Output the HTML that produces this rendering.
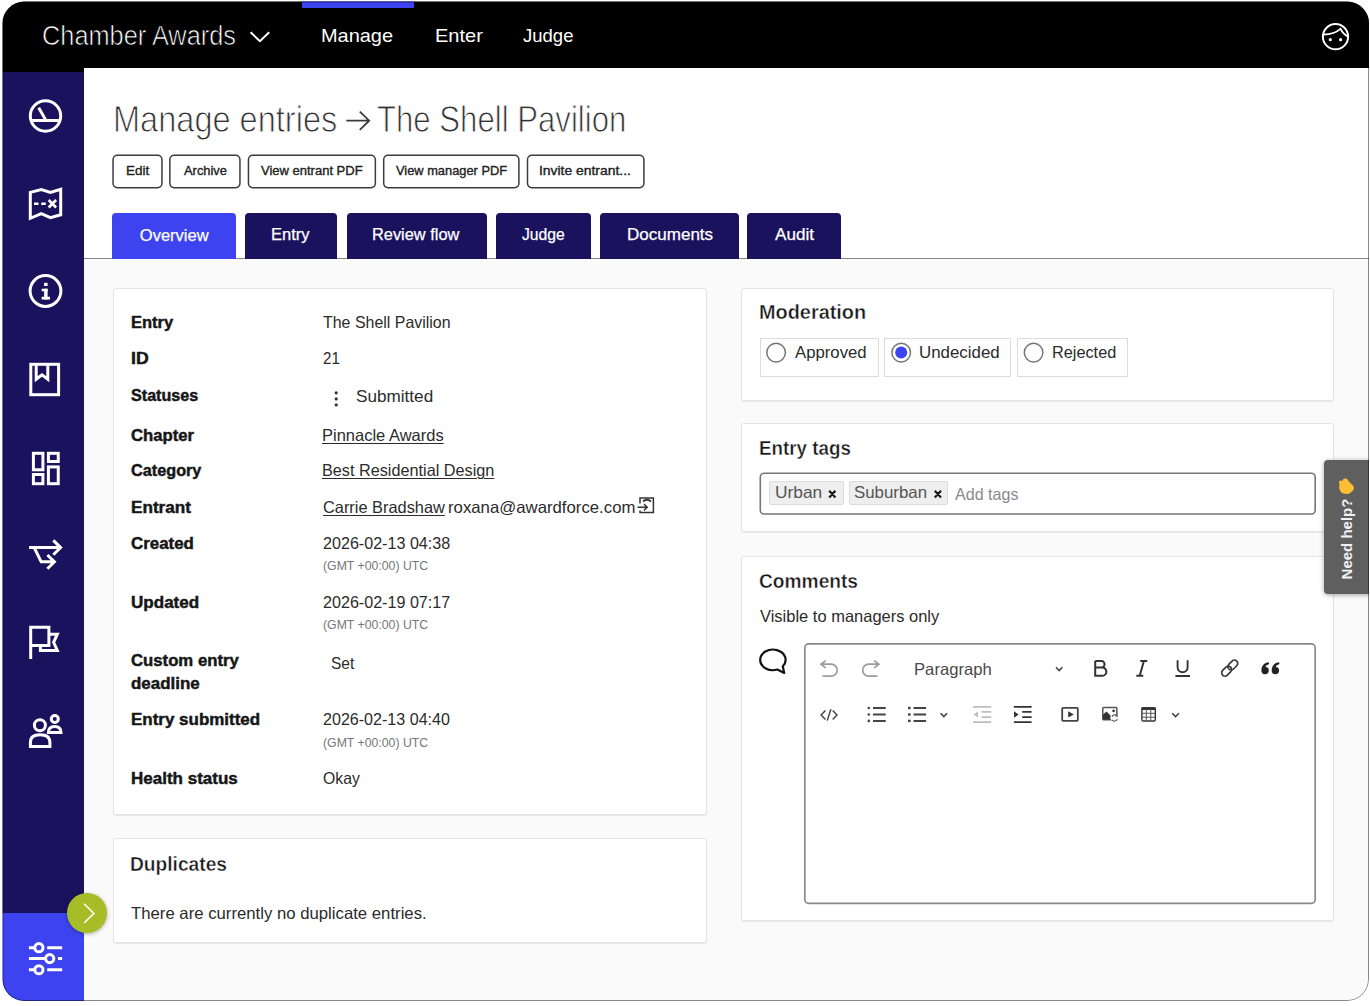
<!DOCTYPE html>
<html lang="en">
<head>
<meta charset="utf-8">
<title>Manage entries - The Shell Pavilion</title>
<style>
*{box-sizing:border-box;margin:0;padding:0}
html,body{width:1370px;height:1006px;background:#fff;overflow:hidden}
body{font-family:"Liberation Sans",sans-serif;position:relative;color:#333}
h1,h2,dl,dt,dd,p,a,button,label,small,span{font:inherit;color:inherit;text-decoration:none;border:0;background:none;margin:0;padding:0}
.abs,.t,svg.i,.card,.btn,.tab,.rb,.tag{position:absolute}
#frame{position:absolute;left:2px;top:1px;width:1367px;height:1000px;overflow:hidden;background:#fafafa;clip-path:inset(.6px 0 0 .5px round 21.5px)}
/* coordinates inside #app are page coordinates */
#app{position:absolute;left:-2px;top:-1px;width:1370px;height:1006px}
#hdr{left:0;top:0;width:1370px;height:68px;background:#000}
#hdr2{left:0;top:68px;width:84px;height:4px;background:#000}
#side{left:0;top:72px;width:84px;height:841px;background:#1b125e}
#side2{left:0;top:913px;width:84px;height:93px;background:#3d44ef}
#white{left:84px;top:68px;width:1290px;height:190px;background:#fff}
#line{left:84px;top:258px;width:1290px;height:1px;background:#868686}
#navbar{left:302px;top:0;width:112px;height:8px;background:#3d44ef}
.t{white-space:pre;line-height:1;transform-origin:0 50%}
.u{text-decoration:underline;text-decoration-thickness:1px;text-underline-offset:2px}
.card{background:#fff;border:1px solid #e4e4e4;border-radius:3px;box-shadow:0 1px 1px rgba(0,0,0,.07)}
.tab{top:213px;height:46px;background:#1b125e;border-radius:4px 4px 0 0}
.tab.on{background:#3d44ef;height:46px}
.rb{top:337.5px;height:39px;border:1px solid #dcdcdc;background:#fff}
.tag{top:481px;height:24px;background:#eee;border:1px solid #dcdcdc;border-radius:2px}
svg.i{overflow:visible}
</style>
</head>
<body>
<div id="frame"><div id="app">
<header>
<div class="abs" id="hdr"></div><div class="abs" id="hdr2"></div><div class="abs" id="navbar"></div>
<a class="t" style="left:42.4px;top:23.3px;font-size:27px;color:#fff;-webkit-text-stroke:.7px #000;transform:scaleX(0.9389)">Chamber Awards</a>
<nav><a class="t" style="left:321.2px;top:27.0px;font-size:18.6px;color:#fff;transform:scaleX(1.0723)">Manage</a><a class="t" style="left:435.1px;top:27.0px;font-size:18.6px;color:#fff;transform:scaleX(1.0760)">Enter</a><a class="t" style="left:523.0px;top:27.0px;font-size:18.6px;color:#fff;transform:scaleX(0.9960)">Judge</a></nav>
</header>
<main>
<div class="abs" id="white"></div><div class="abs" id="line"></div>
<h1><span class="t" style="left:112.5px;top:102.2px;font-size:36.4px;color:#333;-webkit-text-stroke:.9px #fff;transform:scaleX(0.8941)">Manage entries</span><span class="t" style="left:377.4px;top:102.2px;font-size:36.4px;color:#333;-webkit-text-stroke:.9px #fff;transform:scaleX(0.8559)">The Shell Pavilion</span></h1>
<div><button class="t" type="button" style="left:125.6px;top:165.0px;font-size:12.4px;color:#222;-webkit-text-stroke:.35px #222;transform:scaleX(1.0864)">Edit</button><button class="t" type="button" style="left:183.9px;top:165.0px;font-size:12.4px;color:#222;-webkit-text-stroke:.35px #222;transform:scaleX(1.0405)">Archive</button><button class="t" type="button" style="left:260.9px;top:165.0px;font-size:12.4px;color:#222;-webkit-text-stroke:.35px #222;transform:scaleX(1.0487)">View entrant PDF</button><button class="t" type="button" style="left:396.3px;top:165.0px;font-size:12.4px;color:#222;-webkit-text-stroke:.35px #222;transform:scaleX(1.0361)">View manager PDF</button><button class="t" type="button" style="left:539.4px;top:165.0px;font-size:12.4px;color:#222;-webkit-text-stroke:.35px #222;transform:scaleX(1.1208)">Invite entrant...</button></div>
<nav>
<div class="tab on" style="left:112.3px;width:123.5px"></div><a class="t" style="left:139.8px;top:227.0px;font-size:16.5px;color:#fff;-webkit-text-stroke:.25px #fff;transform:scaleX(1.0000)">Overview</a>
<div class="tab" style="left:245.1px;width:92px"></div><a class="t" style="left:271.0px;top:225.6px;font-size:16.5px;color:#fff;-webkit-text-stroke:.25px #fff;transform:scaleX(1.0013)">Entry</a>
<div class="tab" style="left:346.7px;width:140.7px"></div><a class="t" style="left:372.4px;top:225.6px;font-size:16.5px;color:#fff;-webkit-text-stroke:.25px #fff;transform:scaleX(0.9925)">Review flow</a>
<div class="tab" style="left:495.8px;width:95.7px"></div><a class="t" style="left:522.1px;top:225.6px;font-size:16.5px;color:#fff;-webkit-text-stroke:.25px #fff;transform:scaleX(0.9500)">Judge</a>
<div class="tab" style="left:599.7px;width:139.6px"></div><a class="t" style="left:626.7px;top:225.6px;font-size:16.5px;color:#fff;-webkit-text-stroke:.25px #fff;transform:scaleX(1.0319)">Documents</a>
<div class="tab" style="left:747.2px;width:93.7px"></div><a class="t" style="left:774.9px;top:225.6px;font-size:16.5px;color:#fff;-webkit-text-stroke:.25px #fff;transform:scaleX(1.0347)">Audit</a>
</nav>
<section>
<div class="card" style="left:113px;top:288px;width:594px;height:527px"></div>
<dl>
<dt class="t" style="left:130.9px;top:313.7px;font-size:16.5px;font-weight:700;color:#161616;-webkit-text-stroke:.45px #161616;transform:scaleX(1.0000)">Entry</dt><dd class="t" style="left:323.3px;top:313.7px;font-size:16.5px;color:#2b2b2b;transform:scaleX(0.9660)">The Shell Pavilion</dd>
<dt class="t" style="left:130.8px;top:350.3px;font-size:16.5px;font-weight:700;color:#161616;-webkit-text-stroke:.45px #161616;transform:scaleX(1.0712)">ID</dt><dd class="t" style="left:322.8px;top:350.3px;font-size:16.5px;color:#2b2b2b;transform:scaleX(0.9134)">21</dd>
<dt class="t" style="left:131.4px;top:386.9px;font-size:16.5px;font-weight:700;color:#161616;-webkit-text-stroke:.45px #161616;transform:scaleX(0.9778)">Statuses</dt><dd class="t" style="left:356.2px;top:388.2px;font-size:16.5px;color:#2b2b2b;transform:scaleX(1.0386)">Submitted</dd>
<dt class="t" style="left:131.1px;top:427.3px;font-size:16.5px;font-weight:700;color:#161616;-webkit-text-stroke:.45px #161616;transform:scaleX(1.0122)">Chapter</dt><dd><a class="t u" style="left:322.2px;top:427.3px;font-size:16.5px;color:#2b2b2b;transform:scaleX(0.9996)">Pinnacle Awards</a></dd>
<dt class="t" style="left:131.2px;top:462.3px;font-size:16.5px;font-weight:700;color:#161616;-webkit-text-stroke:.45px #161616;transform:scaleX(0.9844)">Category</dt><dd><a class="t u" style="left:322.2px;top:462.3px;font-size:16.5px;color:#2b2b2b;transform:scaleX(0.9835)">Best Residential Design</a></dd>
<dt class="t" style="left:130.9px;top:498.9px;font-size:16.5px;font-weight:700;color:#161616;-webkit-text-stroke:.45px #161616;transform:scaleX(1.0389)">Entrant</dt><dd><a class="t u" style="left:322.5px;top:498.9px;font-size:16.5px;color:#2b2b2b;transform:scaleX(0.9918)">Carrie Bradshaw</a></dd><dd><span class="t" style="left:447.6px;top:498.9px;font-size:16.5px;color:#2b2b2b;transform:scaleX(1.0153)">roxana@awardforce.com</span></dd>
<dt class="t" style="left:131.1px;top:535.2px;font-size:16.5px;font-weight:700;color:#161616;-webkit-text-stroke:.45px #161616;transform:scaleX(1.0235)">Created</dt><dd class="t" style="left:322.8px;top:535.2px;font-size:16.5px;color:#2b2b2b;transform:scaleX(0.9763)">2026-02-13 04:38</dd><dd><small class="t" style="left:322.8px;top:559.5px;font-size:12.4px;color:#777;transform:scaleX(0.9909)">(GMT +00:00) UTC</small></dd>
<dt class="t" style="left:130.9px;top:593.7px;font-size:16.5px;font-weight:700;color:#161616;-webkit-text-stroke:.45px #161616;transform:scaleX(1.0328)">Updated</dt><dd class="t" style="left:322.8px;top:593.7px;font-size:16.5px;color:#2b2b2b;transform:scaleX(0.9763)">2026-02-19 07:17</dd><dd><small class="t" style="left:322.8px;top:618.7px;font-size:12.4px;color:#777;transform:scaleX(0.9909)">(GMT +00:00) UTC</small></dd>
<dt class="t" style="left:131.1px;top:651.6px;font-size:16.5px;font-weight:700;color:#161616;-webkit-text-stroke:.45px #161616;transform:scaleX(1.0133)">Custom entry</dt><dt class="t" style="left:131.1px;top:674.6px;font-size:16.5px;font-weight:700;color:#161616;-webkit-text-stroke:.45px #161616;transform:scaleX(1.0260)">deadline</dt><dd class="t" style="left:330.9px;top:654.8px;font-size:16.5px;color:#2b2b2b;transform:scaleX(0.9375)">Set</dd>
<dt class="t" style="left:130.9px;top:711.4px;font-size:16.5px;font-weight:700;color:#161616;-webkit-text-stroke:.45px #161616;transform:scaleX(1.0283)">Entry submitted</dt><dd class="t" style="left:322.8px;top:711.4px;font-size:16.5px;color:#2b2b2b;transform:scaleX(0.9744)">2026-02-13 04:40</dd><dd><small class="t" style="left:322.8px;top:736.8px;font-size:12.4px;color:#777;transform:scaleX(0.9909)">(GMT +00:00) UTC</small></dd>
<dt class="t" style="left:130.9px;top:769.9px;font-size:16.5px;font-weight:700;color:#161616;-webkit-text-stroke:.45px #161616;transform:scaleX(1.0304)">Health status</dt><dd class="t" style="left:322.8px;top:769.9px;font-size:16.5px;color:#2b2b2b;transform:scaleX(0.9563)">Okay</dd>
</dl>
</section>
<section>
<div class="card" style="left:113px;top:838px;width:594px;height:105px"></div>
<h2 class="t" style="left:130.3px;top:853.9px;font-size:20.0px;font-weight:700;color:#161616;-webkit-text-stroke:.4px #fff;transform:scaleX(0.9586)">Duplicates</h2><p class="t" style="left:131.2px;top:905.3px;font-size:16.5px;color:#2b2b2b;transform:scaleX(1.0138)">There are currently no duplicate entries.</p>
</section>
<section>
<div class="card" style="left:740.5px;top:288px;width:593.7px;height:113px"></div>
<h2 class="t" style="left:759.0px;top:301.7px;font-size:20.0px;font-weight:700;color:#161616;-webkit-text-stroke:.4px #fff;transform:scaleX(0.9938)">Moderation</h2>
<div class="rb" style="left:759.5px;width:119px"></div><label class="t" style="left:795.0px;top:343.7px;font-size:16.5px;color:#2b2b2b;transform:scaleX(1.0144)">Approved</label>
<div class="rb" style="left:884px;width:127px"></div><label class="t" style="left:918.7px;top:343.7px;font-size:16.5px;color:#2b2b2b;transform:scaleX(1.0222)">Undecided</label>
<div class="rb" style="left:1016.5px;width:111px"></div><label class="t" style="left:1051.6px;top:343.7px;font-size:16.5px;color:#2b2b2b;transform:scaleX(0.9865)">Rejected</label>
</section>
<section>
<div class="card" style="left:740.5px;top:423px;width:593.7px;height:109px"></div>
<h2 class="t" style="left:758.5px;top:438.4px;font-size:20.0px;font-weight:700;color:#161616;-webkit-text-stroke:.4px #fff;transform:scaleX(0.9389)">Entry tags</h2>
<div class="tag" style="left:769px;width:74.5px"></div><span class="t" style="left:774.7px;top:484.3px;font-size:16.5px;color:#555;transform:scaleX(1.0518)">Urban</span>
<div class="tag" style="left:849px;width:98.5px"></div><span class="t" style="left:854.2px;top:484.3px;font-size:16.5px;color:#555;transform:scaleX(1.0208)">Suburban</span>
<span class="t" style="left:954.7px;top:485.5px;font-size:16.5px;color:#8a8a8a;transform:scaleX(0.9736)">Add tags</span>
</section>
<section>
<div class="card" style="left:740.5px;top:556px;width:593.7px;height:365px"></div>
<h2 class="t" style="left:759.0px;top:570.9px;font-size:20.0px;font-weight:700;color:#161616;-webkit-text-stroke:.4px #fff;transform:scaleX(0.9582)">Comments</h2><p class="t" style="left:759.5px;top:608.2px;font-size:16.5px;color:#2b2b2b;transform:scaleX(0.9989)">Visible to managers only</p>
<span class="t" style="left:914.0px;top:660.5px;font-size:16.5px;color:#4a4a4a;transform:scaleX(1.0100)">Paragraph</span>
</section>
</main>
<aside>
<div class="abs" id="side"></div><div class="abs" id="side2"></div>
<div class="abs" style="left:67px;top:893px;width:40px;height:40px;border-radius:50%;background:#a7bd27;box-shadow:0 1px 4px rgba(0,0,0,.3)"></div>
</aside>
<div class="abs" style="left:1324px;top:459.5px;width:50px;height:134.5px;background:#5f5f5f;border-radius:4px 0 0 4px;box-shadow:0 1px 5px rgba(0,0,0,.35)"></div>
<div class="t" style="left:1345.6px;top:539.3px;font-size:15px;font-weight:700;color:#f1f1f1;transform:translate(-50%,-50%) rotate(-90deg);transform-origin:50% 50%">Need help?</div>
<svg class="i" style="left:0;top:0" width="1370" height="1006" viewBox="0 0 1370 1006" fill="none">
<!-- buttons / input boxes -->
<g stroke="#3c3c3c" stroke-width="1.5"><rect x="113.05" y="155.15" width="48.9" height="32.5" rx="4.3"/><rect x="169.85" y="155.15" width="70.1" height="32.5" rx="4.3"/><rect x="248.45" y="155.15" width="126.9" height="32.5" rx="4.3"/><rect x="383.7" y="155.15" width="135.2" height="32.5" rx="4.3"/><rect x="527.5" y="155.15" width="116.4" height="32.5" rx="4.3"/></g>
<rect x="760.3" y="473.3" width="554.9" height="40.7" rx="3.8" stroke="#767676" stroke-width="1.6"/>
<rect x="804.8" y="643.9" width="510.4" height="259.4" rx="3.8" stroke="#8a8a8a" stroke-width="1.7"/>
<!-- radios -->
<g stroke="#767676" stroke-width="1.5" fill="#fff"><circle cx="776.1" cy="352.6" r="9.3"/><circle cx="901.2" cy="352.6" r="9.3"/><circle cx="1033.6" cy="352.6" r="9.3"/></g><circle cx="901.2" cy="352.6" r="6" fill="#3d44ef"/>
<!-- header chevron + avatar -->
<path d="M250.6 32.3L259.9 41.2L269.2 32.3" stroke="#fff" stroke-width="2"/>
<g stroke="#fff" stroke-width="2"><circle cx="1335.5" cy="36.7" r="12.6"/><path d="M1323.6 34.6C1329 34.4 1335 33.8 1340.4 28.8C1342.5 32.6 1345 35.2 1347.8 36.4" stroke-width="1.8"/></g>
<circle cx="1330.3" cy="39.7" r="1.6" fill="#fff"/><circle cx="1340.6" cy="39.7" r="1.6" fill="#fff"/>
<!-- sidebar icons -->
<g stroke="#fff" stroke-width="3">
<circle cx="45.5" cy="116" r="15.2"/><path d="M31 120.5H60M38.7 107.8L45.7 120"/>
<path d="M30.3 192.4L41.3 189.5L50.4 192.4L60.7 189.2V214.8L50.4 217.6L41.3 213.7L30.3 218.3Z"/>
<path d="M48.7 200L56.1 207.5M56.1 200L48.7 207.5" stroke-width="2.7"/>
<circle cx="45.5" cy="291" r="15.4"/>
<rect x="30.8" y="364.3" width="27.8" height="30.4"/><path d="M36.2 364V379.3L42 374.8L47.8 379.3V364"/>
<rect x="33.4" y="453.3" width="9.5" height="16.5"/><rect x="48.4" y="453.3" width="9.85" height="8.2"/><rect x="33.4" y="474.5" width="9.5" height="9.2"/><rect x="48.4" y="466.9" width="9.85" height="16.8"/>
<path d="M29.1 547.6H60M53.3 540.4L60.6 547.6L53.3 554.8M34.2 547.6L41.2 561.8H54M47.4 555L54.4 561.8L47.4 568.8"/>
<path d="M30.7 625.8V658.9M30.7 627.3H48.9V645.5H30.7M48.9 634.3H57.3L53.6 642.3L57.3 650.5H40.4V645.5"/>
<circle cx="39.9" cy="725.3" r="5.5"/><path d="M30.4 746.4V742.5Q30.4 734.8 40.15 734.8Q49.9 734.8 49.9 742.5V746.4Z"/>
<circle cx="54.8" cy="719" r="3.5"/><path d="M48.4 732.5Q48.4 726.4 54.7 726.4Q61 726.4 61 732.5Z"/>
<path d="M28.9 947.7H34.8M47.2 947.7H62.2M28.9 958.6H45.6M58 958.6H62.2M28.9 969.75H34.8M47.2 969.75H62.2"/>
<circle cx="38.9" cy="947.7" r="4.1"/><circle cx="49.7" cy="958.6" r="4.1"/><circle cx="38.9" cy="969.75" r="4.1"/>
</g>
<g fill="#fff"><rect x="34" y="202.5" width="4.5" height="2.5"/><rect x="41.3" y="202.5" width="4.5" height="2.5"/>
<rect x="44.1" y="282.8" width="3.5" height="3.2"/><rect x="41.7" y="288.75" width="5.9" height="2.5"/><rect x="44.1" y="288.75" width="3.5" height="10.7"/><rect x="41.7" y="296.75" width="8.3" height="2.75"/></g>
<path d="M84.1 903.8L93.9 913.4L84.1 923" stroke="#fff" stroke-width="1.5"/>
<!-- hand emoji -->
<path d="M1339.4 483.5C1338.6 481.5 1339.6 480.2 1341.2 480.6L1342.4 481.2C1342.6 479.2 1344 478.2 1345.6 478.6C1347 478.8 1347.800 479.8 1348.6 481.2L1352.8 485.2C1354.2 486.8 1354.2 488.800 1353 490.4L1350.6 492.8C1348.6 494.2 1345.6 494.4 1343.4 493.6C1341 492.6 1339.6 490.6 1339.2 488Z" fill="#fdbe35"/>
<!-- title arrow -->
<path d="M346.3 120.7H369M359.8 111.6L369.2 120.7L359.8 129.8" stroke="#3a3a3a" stroke-width="1.8"/>
<!-- status dots -->
<g fill="#333"><circle cx="336.2" cy="392.8" r="1.6"/><circle cx="336.2" cy="398.9" r="1.6"/><circle cx="336.2" cy="404.9" r="1.6"/></g>
<!-- login-as icon -->
<path d="M640 503.5V498H653.4V512.4H640V510.5M637.6 507.2H647M644 504L647.2 507.2L644 510.4" stroke="#333" stroke-width="1.5"/><path d="M643 501.6Q647 498 651 501.6" stroke="#333" stroke-width="2"/>
<!-- comment bubble -->
<path d="M782.8 666.3A12.7 10.3 0 1 0 777.4 669.5L784.2 672.9Z" stroke="#111" stroke-width="2.2" stroke-linejoin="round"/>
<!-- tag x -->
<g stroke="#1a1a1a" stroke-width="2.2"><path d="M829.2 490.8L835.4 497.4M835.4 490.8L829.2 497.4M934.8 490.8L941 497.4M941 490.8L934.8 497.4"/></g>
<!-- toolbar row 1 -->
<g stroke="#9c9c9c" stroke-width="1.7"><path d="M825.7 660.6L821 664.2L825.7 667.8M821 664.2H831.2A6 6 0 0 1 831.2 676.2H822.4"/><path d="M874.2 660.6L878.9 664.2L874.2 667.8M878.9 664.2H868.7A6 6 0 0 0 868.7 676.2H877.5"/></g>
<g stroke="#444" stroke-width="1.6"><path d="M1056 667.3L1059.2 670.6L1062.4 667.3M940.6 713.3L943.85 716.6L947.1 713.3M1172.2 713.2L1175.55 716.6L1178.9 713.2"/></g>
<g stroke="#333" stroke-width="2">
<path d="M1095.2 661V675.8H1102.3A4.1 4.1 0 0 0 1102.3 667.6H1095.2M1095.2 667.6H1101.3A3.3 3.3 0 0 0 1101.3 661H1095.2"/>
<path d="M1140.3 661H1147.3M1136.3 675.8H1143.3M1143.9 661L1139.7 675.8"/>
<path d="M1177.6 660.3V667.3A5 5 0 0 0 1187.6 667.3V660.3M1175.4 676H1190" stroke-width="1.9"/>
</g>
<g stroke="#3a3a3a" stroke-width="1.7" transform="rotate(-45 1229.7 668.1)"><rect x="1219.75" y="664.8" width="11.2" height="6.6" rx="3.3"/><rect x="1228.45" y="664.8" width="11.2" height="6.6" rx="3.3"/></g>
<g fill="#222"><path d="M1261.4 670.6C1261.4 665.5 1264.3 662.8 1268.7 662.2L1269.2 664C1266.8 664.8 1265.5 665.9 1265.4 666.95A3.7 3.7 0 1 1 1261.4 670.6Z"/><path d="M1271.7 670.6C1271.7 665.5 1274.6 662.8 1279.0 662.2L1279.5 664C1277.1 664.8 1275.8 665.9 1275.7 666.95A3.7 3.7 0 1 1 1271.7 670.6Z"/></g>
<!-- toolbar row 2 -->
<path d="M825.4 710.4L821.1 714.9L825.4 719.4M832.7 710.4L837 714.9L832.7 719.4M830.9 709.2L827.2 720.6" stroke="#444" stroke-width="1.45"/>
<g stroke="#444" stroke-width="2"><path d="M873 708H885.7M873 714.5H885.7M873 720.9H885.7M913.5 708H926.1M913.5 714.5H926.1M913.5 720.9H926.1"/></g>
<g fill="#444"><circle cx="868.8" cy="708" r="1.3"/><circle cx="868.8" cy="714.5" r="1.3"/><circle cx="868.8" cy="720.9" r="1.3"/><rect x="908" y="706.8" width="2.6" height="2.4"/><rect x="908" y="713.3" width="2.6" height="2.4"/><rect x="908" y="719.7" width="2.6" height="2.4"/></g>
<g stroke="#bdbdbd" stroke-width="1.8"><path d="M973 706.8H991.2M981.5 711.9H991.2M981.5 717.1H991.2M973 722.2H991.2"/></g><path d="M978 711.5V717.5L973.6 714.5Z" fill="#bdbdbd"/>
<g stroke="#333" stroke-width="1.8"><path d="M1013.8 706.8H1031.6M1022.2 711.9H1031.6M1022.2 717.1H1031.6M1013.8 722.2H1031.6"/></g><path d="M1014 711.3V717.7L1018.7 714.5Z" fill="#333"/>
<rect x="1062.2" y="707.8" width="15.6" height="13.1" rx="0.8" stroke="#444" stroke-width="1.8"/><path d="M1068.2 711.3V717.5L1073.8 714.4Z" fill="#333"/>
<rect x="1102.8" y="707.4" width="14" height="12.3" rx="0.8" stroke="#555" stroke-width="1.5"/><path d="M1103 719.5V714.5L1106.5 711.5L1110.5 715.5V719.5Z" fill="#333"/><circle cx="1113.6" cy="710.9" r="1.3" fill="#333"/><circle cx="1114.6" cy="717.8" r="3.9" fill="#fff"/><path d="M1112 716.9A2.8 2.8 0 0 1 1117 715.9M1117.3 718.800A2.8 2.8 0 0 1 1112.2 719.8M1117.2 714.3V716.1H1115.4" stroke="#666" stroke-width="1.2"/>
<rect x="1141.9" y="708" width="13.4" height="13" rx="1.2" stroke="#333" stroke-width="1.4"/><path d="M1141.5 708.6H1155.7" stroke="#333" stroke-width="2.8"/><path d="M1146.3 709V721M1150.8 709V721M1142 713.3H1155M1142 717.2H1155" stroke="#555" stroke-width="1"/>
<rect x="3" y="2.1" width="1365.5" height="998.4" rx="21" stroke="#000" stroke-opacity=".45" stroke-width="1"/>
</svg>
</div></div>
</body>
</html>
